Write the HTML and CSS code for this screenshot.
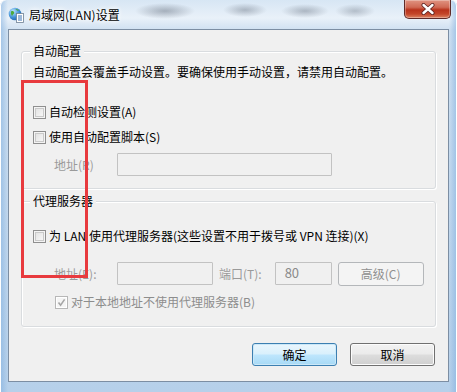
FILE: index.html
```html
<!DOCTYPE html>
<html lang="zh-CN">
<head>
<meta charset="utf-8">
<title>局域网(LAN)设置</title>
<link rel="stylesheet" href="styles.css">
</head>
<body>
<div class="window">
  <div class="titlebar">
    <svg class="app-icon" width="16" height="16" viewBox="0 0 16 16">
      <defs>
        <radialGradient id="gl" cx="0.35" cy="0.3" r="0.8">
          <stop offset="0" stop-color="#bfe6ff"/>
          <stop offset="0.6" stop-color="#3d8fd6"/>
          <stop offset="1" stop-color="#1c5ea8"/>
        </radialGradient>
      </defs>
      <circle cx="7" cy="7" r="6.3" fill="url(#gl)"/>
      <path d="M3 4.5 C4.5 3.5 6 4.2 6.2 5.6 C6.4 7 4.8 7.4 4.3 8.8 C3.6 8.6 2.6 7 3 4.5Z" fill="#4caa3c"/>
      <path d="M7.5 2 C9 1.8 10.5 2.6 11 3.6 C9.8 4 8.6 3.6 7.5 2Z" fill="#4caa3c"/>
      <rect x="8.5" y="6.5" width="7" height="9" fill="#ffffff" stroke="#6d7f93" stroke-width="0.8"/>
      <path d="M10 9h4M10 11h4M10 13h4" stroke="#3a73b5" stroke-width="1"/>
    </svg>
    <span class="title">局域网(LAN)设置</span>
    <div class="close">
      <svg width="16" height="12" viewBox="0 0 16 12">
        <path d="M3.5 2 L12.5 10 M12.5 2 L3.5 10" stroke="#5a2220" stroke-width="4" stroke-linecap="round"/>
        <path d="M3.5 2 L12.5 10 M12.5 2 L3.5 10" stroke="#ffffff" stroke-width="2.4" stroke-linecap="round"/>
      </svg>
    </div>
  </div>

  <div class="client">
    <div class="group g-auto">
      <div class="group-title">自动配置</div>
      <div class="desc">自动配置会覆盖手动设置。要确保使用手动设置，请禁用自动配置。</div>
      <label class="check c-detect"><span class="box"></span>自动检测设置(A)</label>
      <label class="check c-script"><span class="box"></span>使用自动配置脚本(S)</label>
      <div class="field-row r-script">
        <span class="field-label">地址(R)</span>
        <span class="input in-wide"></span>
      </div>
    </div>

    <div class="group g-proxy">
      <div class="group-title">代理服务器</div>
      <label class="check c-proxy"><span class="box"></span>为 LAN 使用代理服务器(这些设置不用于拨号或 VPN 连接)(X)</label>
      <div class="field-row r-proxy">
        <span class="field-label">地址(E):</span>
        <span class="input in-addr"></span>
        <span class="field-label port-label">端口(T):</span>
        <span class="input in-port">80</span>
        <span class="btn btn-disabled">高级(C)</span>
      </div>
      <label class="check c-local disabled"><span class="box checked">
        <svg width="11" height="11" viewBox="0 0 11 11"><path d="M2.5 5.5 L4.6 8.2 L8.6 2.4" fill="none" stroke="#a6a6a6" stroke-width="1.6"/></svg>
      </span>对于本地地址不使用代理服务器(B)</label>
    </div>

    <div class="actions">
      <span class="btn btn-default">确定</span>
      <span class="btn">取消</span>
    </div>
  </div>

  <div class="annotation"></div>
</div>
</body>
</html>
```

FILE: styles.css
```css
* { box-sizing: border-box; }

html, body {
  margin: 0;
  padding: 0;
  background: #ffffff;
}

body {
  font-family: "Noto Sans CJK SC", "Noto Sans", sans-serif;
  font-size: 12px;
  line-height: 16px;
  color: #000000;
}

.window {
  position: relative;
  width: 457px;
  height: 392px;
  display: flex;
  flex-direction: column;
  padding: 0 8px 10px 8px;
  background:
    radial-gradient(ellipse 30px 8px at 165px 11px, rgba(90,100,115,0.45), rgba(90,100,115,0) 100%),
    radial-gradient(ellipse 22px 7px at 245px 10px, rgba(90,100,115,0.40), rgba(90,100,115,0) 100%),
    radial-gradient(ellipse 24px 7px at 305px 11px, rgba(90,100,115,0.40), rgba(90,100,115,0) 100%),
    radial-gradient(ellipse 20px 7px at 355px 11px, rgba(90,100,115,0.35), rgba(90,100,115,0) 100%),
    linear-gradient(90deg, rgba(120,170,220,0.55) 0px, rgba(120,170,220,0) 8px, rgba(120,170,220,0) 449px, rgba(120,170,220,0.55) 457px),
    linear-gradient(180deg, #d7e6f4 0px, #e9f1f9 18px, #cfe0f1 30px, #b6d0ea 100%);
  border-radius: 6px 6px 0 0;
  box-shadow: inset 1px 0 0 #ffffff, inset -1px 0 0 #ffffff;
}

.titlebar {
  height: 29px;
  display: flex;
  align-items: flex-start;
  flex: none;
}

.app-icon {
  margin-top: 7px;
  flex: none;
}

.title {
  margin-left: 5px;
  margin-top: 7px;
  font-size: 12px;
  line-height: 16px;
  color: #000000;
  text-shadow: 0 0 6px #ffffff, 0 0 4px #ffffff;
}

.close {
  margin-left: auto;
  margin-right: -2px;
  width: 47px;
  height: 19px;
  display: flex;
  align-items: center;
  justify-content: center;
  border: 1px solid #5e2a28;
  border-top: none;
  border-radius: 0 0 5px 5px;
  background: linear-gradient(180deg, #e09482 0%, #d06a55 40%, #b8331c 55%, #c4462a 78%, #dc8463 100%);
  box-shadow: inset 0 0 0 1px rgba(255,255,255,0.3);
}

.client {
  flex: 1;
  display: flex;
  flex-direction: column;
  background: #f0f0f0;
  border: 1px solid #7c8ea3;
  padding: 21px 12px 0 12px;
}

.group {
  display: flex;
  flex-direction: column;
  align-items: flex-start;
  border: 1px solid #d9dcdf;
  border-radius: 3px;
  box-shadow: inset 1px 1px 0 #ffffff, 1px 1px 0 #ffffff;
  padding: 0 0 0 11px;
}

.g-auto { padding-bottom: 12px; }
.g-proxy { margin-top: 12px; padding-bottom: 16px; }

.group-title {
  margin-top: -9px;
  margin-left: -3px;
  padding: 0 3px;
  background: #f0f0f0;
  line-height: 16px;
}

.desc { margin-top: 5px; }

.check {
  display: flex;
  align-items: center;
  height: 16px;
  white-space: nowrap;
}

.c-detect { margin-top: 24px; }
.c-script { margin-top: 9px; }
.c-proxy { margin-top: 19px; }
.c-local { margin-top: 9px; margin-left: 22px; }

.box {
  width: 13px;
  height: 13px;
  margin-right: 3px;
  flex: none;
  display: flex;
  align-items: center;
  justify-content: center;
  border: 1px solid #8f8f8f;
  background: linear-gradient(135deg, #dedede 0%, #f0f0f0 60%, #fbfbfb 100%);
  box-shadow: inset 0 0 0 1px #f4f4f4, inset 0 0 0 2px #c9c9c9;
}

.box.checked {
  border-color: #b7b7b7;
  background: #f5f5f5;
  box-shadow: inset 0 0 0 1px #ffffff;
}

.disabled { color: #8d8d8d; }

.field-row {
  display: flex;
  align-items: center;
  padding-left: 21px;
  height: 23px;
}

.r-script { margin-top: 8px; }
.r-proxy { margin-top: 18px; }

.field-label {
  width: 63px;
  flex: none;
  color: #9a9a9a;
}

.port-label {
  width: auto;
  margin-left: 6px;
  margin-right: 13px;
}

.input {
  height: 23px;
  border: 1px solid #c2c2c2;
  border-radius: 1px;
  background: #f0f0f0;
  color: #8a8a8a;
  padding: 2px 0 0 9px;
  flex: none;
}

.in-wide { width: 215px; }
.in-addr { width: 96px; }
.in-port { width: 57px; font-size: 13px; }

.btn {
  display: flex;
  align-items: center;
  justify-content: center;
  width: 85px;
  height: 23px;
  border: 1px solid #707070;
  border-radius: 3px;
  background: linear-gradient(180deg, #f2f2f2 0%, #ebebeb 48%, #dddddd 52%, #cfcfcf 100%);
  box-shadow: inset 0 0 0 1px #fcfcfc;
  color: #000000;
  flex: none;
}

.btn-disabled {
  margin-left: 6px;
  width: 86px;
  height: 24px;
  margin-top: 1px;
  border-color: #b4b7ba;
  background: #f4f4f4;
  box-shadow: none;
  color: #8f8f8f;
}

.btn-default {
  border-color: #3c7fb1;
  background: linear-gradient(180deg, #eaf6fd 0%, #d9f0fc 48%, #bee6fd 52%, #a7d9f5 100%);
  box-shadow: inset 0 0 0 1px #cbe8f8;
}

.actions {
  display: flex;
  justify-content: flex-end;
  gap: 13px;
  margin-top: 16px;
  margin-right: 1px;
}

.annotation {
  position: absolute;
  left: 21px;
  top: 80px;
  width: 67px;
  height: 198px;
  border: 3px solid #e83a3e;
  pointer-events: none;
}
```
